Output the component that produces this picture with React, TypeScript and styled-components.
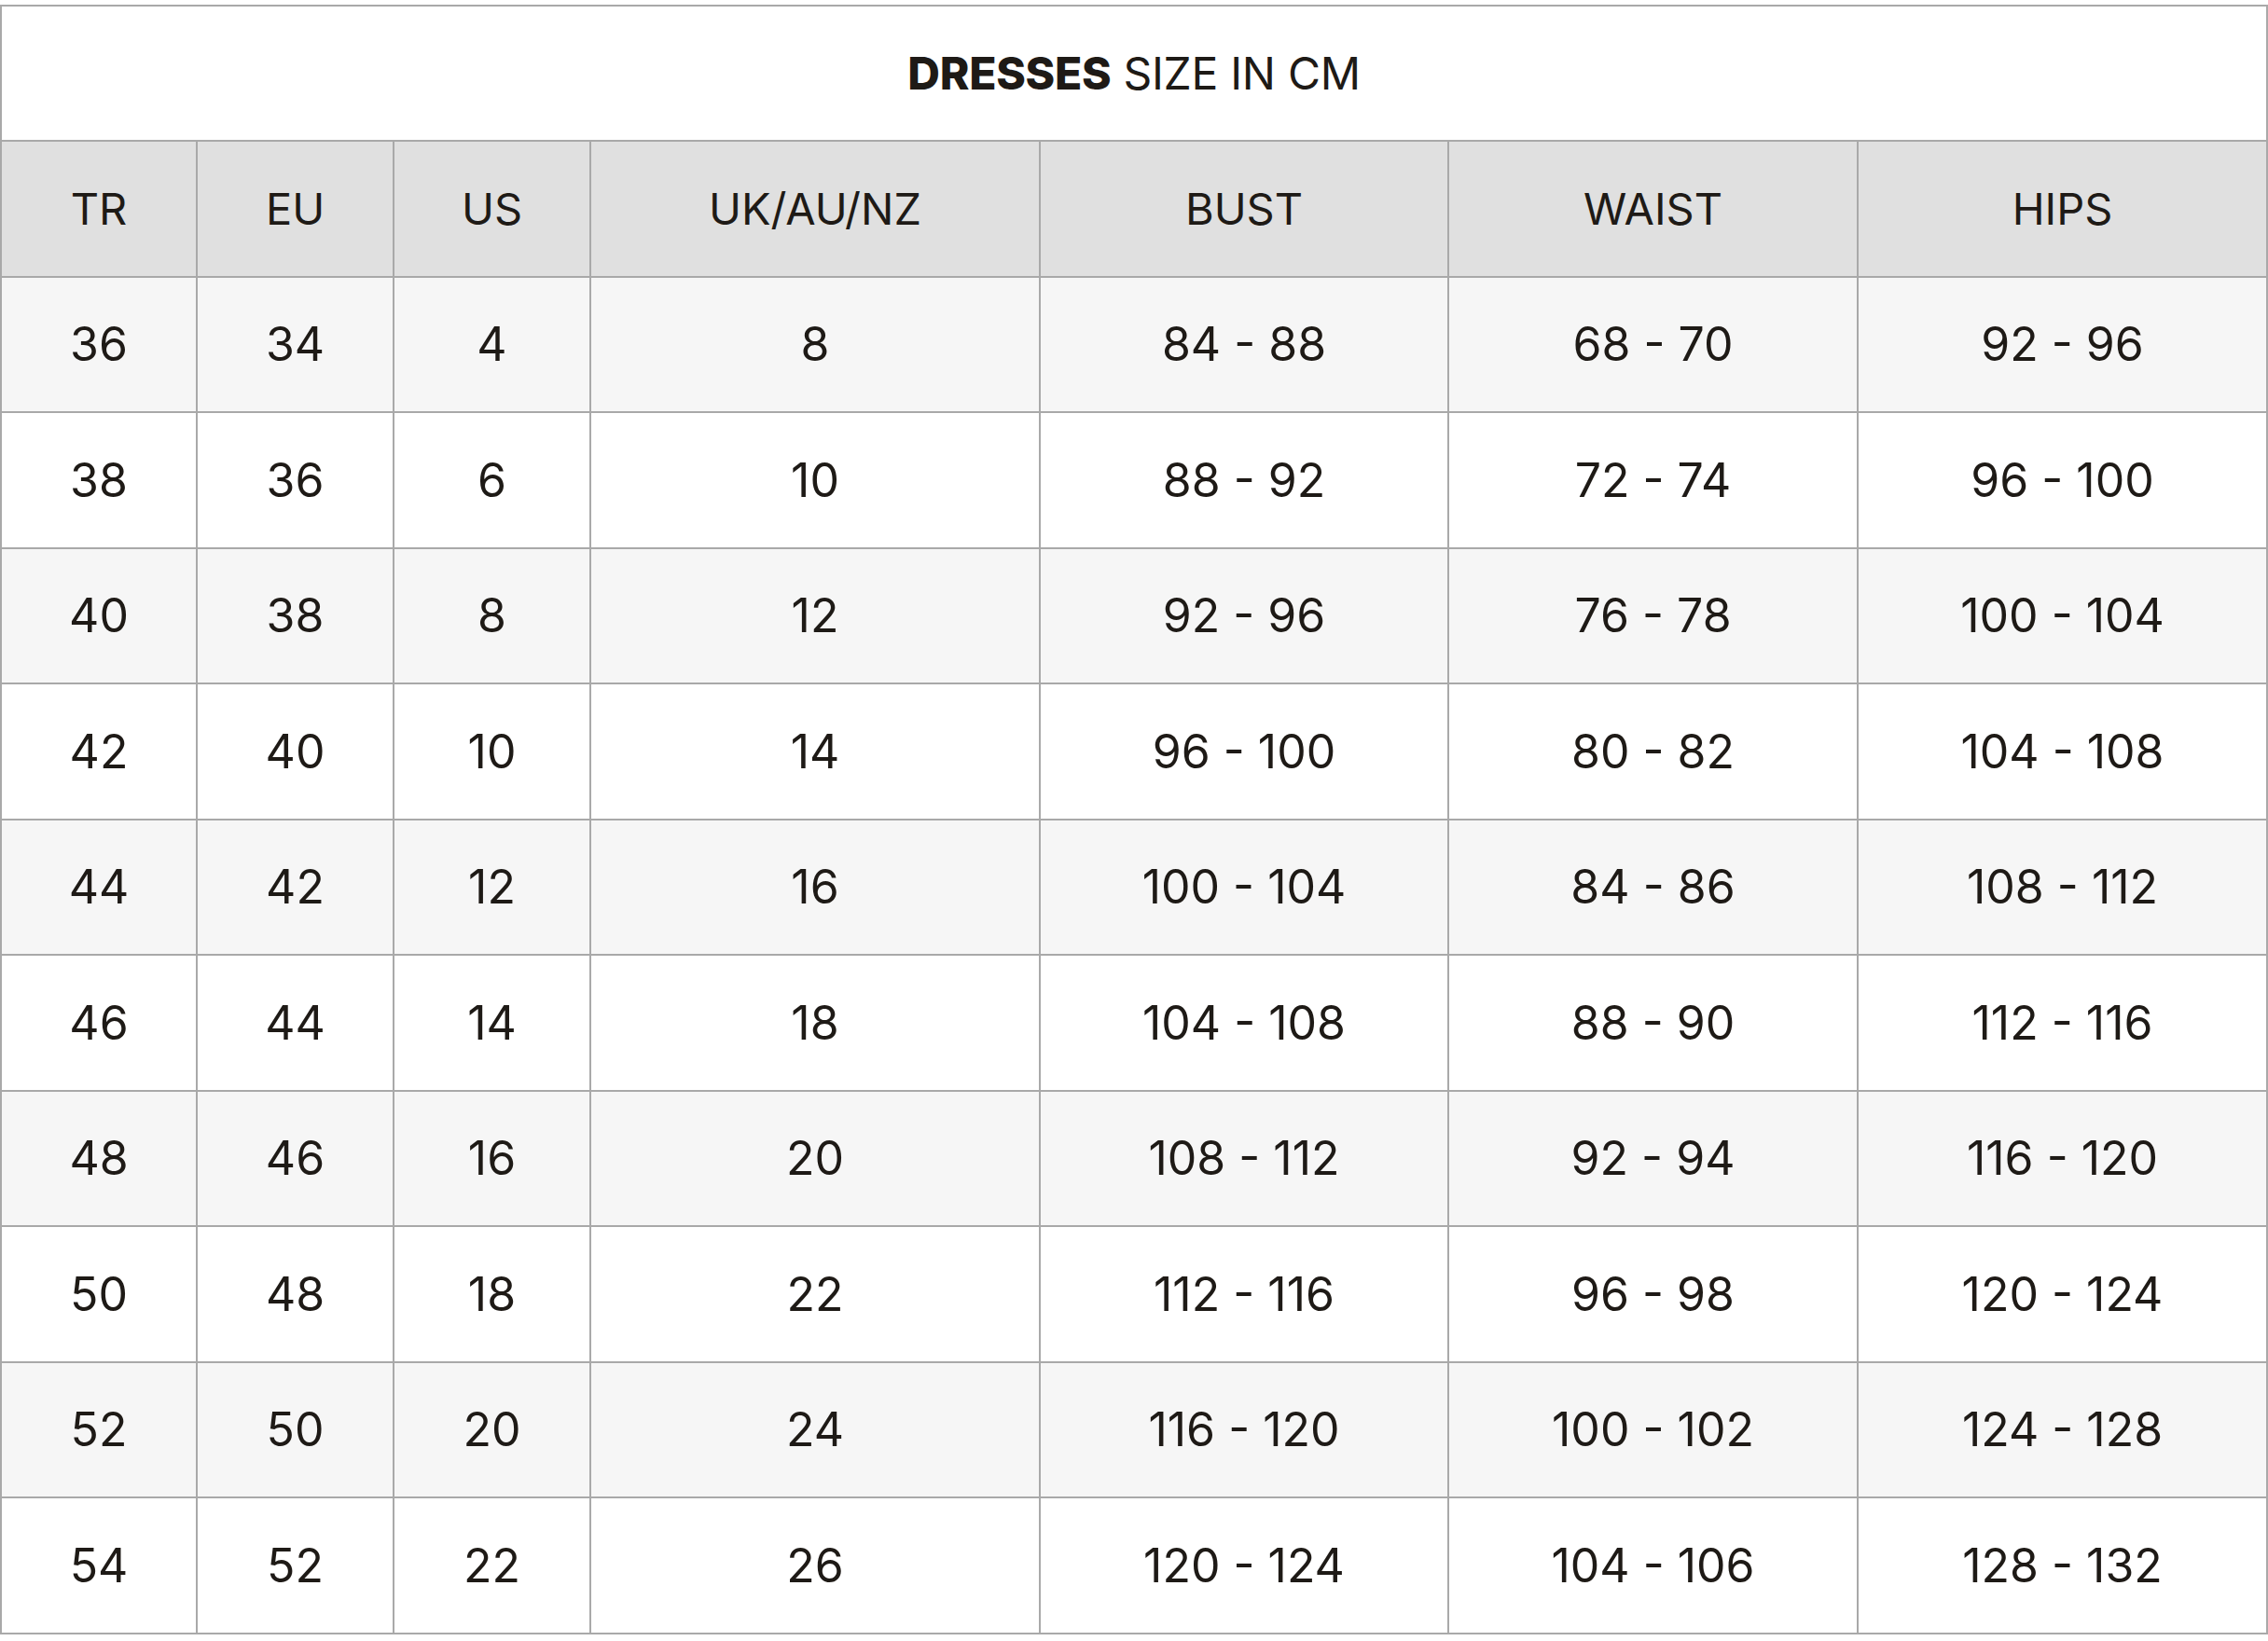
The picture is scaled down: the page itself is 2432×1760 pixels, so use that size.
import styled, { createGlobalStyle } from "styled-components";

const GlobalStyle = createGlobalStyle`
    html, body {
        margin: 0;
        padding: 0;
        background: #ffffff;
    }
    body {
        font-family: 'Inter', 'Liberation Sans', sans-serif;
        color: #1e1a16;
    }
`

const Page = styled.div`
    padding-top: 5px;
    width: 2432px;
`

const SizeTable = styled.table`
    width: 2430px;
    table-layout: fixed;
    border-collapse: collapse;
    border: 2px solid #a9a9a9;
`

const Title = styled.th`
    height: 143px;
    padding: 0;
    background: #ffffff;
    font-size: 48px;
    font-weight: 400;
    letter-spacing: -0.3px;
    text-align: center;
    vertical-align: middle;
    border: 2px solid #a9a9a9;
`

const Strong = styled.span`
    font-weight: 800;
`

const HeadCell = styled.th`
    height: 143.5px;
    padding: 0;
    background: #e0e0e0;
    font-size: 47px;
    font-weight: 400;
    text-align: center;
    border: 2px solid #a9a9a9;
`

type rowProps = {
    $shaded?: boolean;
}

const Row = styled.tr<rowProps>`
    background: ${props => props.$shaded ? "#f6f6f6" : "#ffffff"};
`

const Cell = styled.td`
    height: 143.5px;
    padding: 0;
    font-size: 50px;
    text-align: center;
    border: 2px solid #a9a9a9;
`

const columns = [
    { label: "TR", width: 210 },
    { label: "EU", width: 211 },
    { label: "US", width: 211 },
    { label: "UK/AU/NZ", width: 482 },
    { label: "BUST", width: 438 },
    { label: "WAIST", width: 439 },
    { label: "HIPS", width: 439 },
]

const rows = [
    ["36", "34", "4", "8", "84 - 88", "68 - 70", "92 - 96"],
    ["38", "36", "6", "10", "88 - 92", "72 - 74", "96 - 100"],
    ["40", "38", "8", "12", "92 - 96", "76 - 78", "100 - 104"],
    ["42", "40", "10", "14", "96 - 100", "80 - 82", "104 - 108"],
    ["44", "42", "12", "16", "100 - 104", "84 - 86", "108 - 112"],
    ["46", "44", "14", "18", "104 - 108", "88 - 90", "112 - 116"],
    ["48", "46", "16", "20", "108 - 112", "92 - 94", "116 - 120"],
    ["50", "48", "18", "22", "112 - 116", "96 - 98", "120 - 124"],
    ["52", "50", "20", "24", "116 - 120", "100 - 102", "124 - 128"],
    ["54", "52", "22", "26", "120 - 124", "104 - 106", "128 - 132"],
]

const App = () => (
    <Page>
        <GlobalStyle />
        <SizeTable>
            <colgroup>
                {columns.map(col => (
                    <col key={col.label} style={{ width: col.width }} />
                ))}
            </colgroup>
            <thead>
                <tr>
                    <Title colSpan={7}>
                        <Strong>DRESSES</Strong> SIZE IN CM
                    </Title>
                </tr>
                <tr>
                    {columns.map(col => (
                        <HeadCell key={col.label}>{col.label}</HeadCell>
                    ))}
                </tr>
            </thead>
            <tbody>
                {rows.map((row, i) => (
                    <Row key={row[0]} $shaded={i % 2 === 0}>
                        {row.map((value, j) => (
                            <Cell key={j}>{value}</Cell>
                        ))}
                    </Row>
                ))}
            </tbody>
        </SizeTable>
    </Page>
)

export default App
